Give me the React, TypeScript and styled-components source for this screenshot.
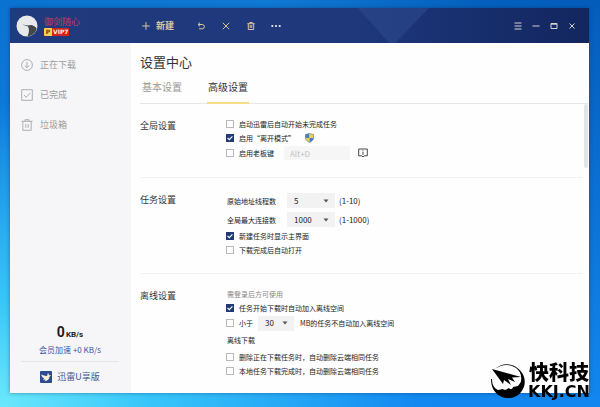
import React from "react";
import styled, { createGlobalStyle } from "styled-components";

const Global = createGlobalStyle`
  * { box-sizing: border-box; }
  html, body { margin: 0; }
  body, button, input, select {
    font-family: "Noto Sans CJK SC", sans-serif;
    font-size: 7px;
    line-height: 12px;
    color: #222;
  }
  button, input, select { margin: 0; padding: 0; border: 0; background: none; }
  button, select, a { cursor: pointer; }
`;

const Desktop = styled.div`
  min-height: 100vh;
  display: flex;
  padding: 8px 11px 14px 10px;
  background:
    radial-gradient(ellipse 70% 75% at 0% 100%, #6ce8fb 0%, rgba(60, 205, 250, 0.9) 35%, rgba(30, 150, 235, 0) 100%),
    linear-gradient(180deg, rgba(0, 70, 170, 0) 0%, rgba(20, 140, 245, 0.9) 100%),
    linear-gradient(90deg, #0a72d0 0%, #1079d4 45%, #0560bd 80%, #045cba 100%);
`;

const Window = styled.div`
  flex: 1;
  min-width: 0;
  display: flex;
  flex-direction: column;
  background: #fefefe;
  box-shadow: 0 0 4px rgba(0, 40, 90, 0.45);
`;

const Header = styled.header`
  position: relative;
  height: 35px;
  display: flex;
  align-items: center;
  padding: 0 13px 0 6px;
  background: linear-gradient(90deg, #203a7e 0%, #1e387b 60%, #152a66 90%, #12265f 100%);
`;

const HeaderFacet = styled.svg`
  position: absolute;
  top: 0;
  right: 160px;
  width: 71px;
  height: 35px;
`;

const Account = styled.div`
  flex: none;
  width: 126px;
  display: flex;
  align-items: center;
  gap: 6px;
`;

const UserInfo = styled.div`
  display: flex;
  flex-direction: column;
  align-items: flex-start;
  gap: 1px;
`;

const UserName = styled.div`
  font-size: 9px;
  line-height: 11px;
  color: #c23a5c;
`;

const Vip = styled.div`
  display: flex;
  height: 8px;
  border-radius: 1px;
  overflow: hidden;
  background: #d6231c;
  color: #fff0c4;
  font: 700 6px/8px "DejaVu Sans", sans-serif;
`;

const VipMark = styled.span`
  width: 8px;
  background: #f7cf55;
  color: #6b3c08;
  text-align: center;
`;

const VipLevel = styled.span`
  padding: 0 1px;
`;

const Toolbar = styled.nav`
  flex: 1;
  display: flex;
  align-items: center;
`;

const ToolButton = styled.button<{ $wide?: boolean }>`
  display: flex;
  align-items: center;
  justify-content: center;
  gap: 6px;
  width: ${(p) => (p.$wide ? 32 : 12)}px;
  margin-right: ${(p) => (p.$wide ? 21 : 13)}px;
  height: 16px;
  color: #d9c69c;
  font-size: 9px;
  font-weight: 700;
  white-space: nowrap;
`;

const WindowButtons = styled.div`
  position: relative;
  display: flex;
  gap: 10px;
`;

const WindowButton = styled.button`
  display: flex;
  width: 8px;
  height: 10px;
  align-items: center;
  color: #d5d3cf;
`;

const Body = styled.div`
  flex: 1;
  display: flex;
  min-height: 0;
`;

const Sidebar = styled.aside`
  flex: none;
  width: 121px;
  display: flex;
  flex-direction: column;
  background: #f6f6f8;
  padding: 7px 12px 10px 11px;
`;

const SideLink = styled.a`
  display: flex;
  align-items: center;
  gap: 7px;
  height: 30px;
  font-size: 9px;
  color: #9c9c9e;
  text-decoration: none;
`;

const Speed = styled.div`
  margin-top: auto;
  display: flex;
  align-items: baseline;
  justify-content: center;
  gap: 1px;
  font: 700 8px/18px Roboto, sans-serif;
  color: #1c1c1c;
`;

const SpeedValue = styled.span`
  font-size: 14px;
`;

const Boost = styled.div`
  text-align: center;
  font-size: 8px;
  color: #3954a8;
  padding-bottom: 5px;
  border-bottom: 1px solid #e2e5ea;
`;

const Edition = styled.a`
  display: flex;
  align-items: center;
  justify-content: center;
  gap: 5px;
  padding-top: 9px;
  font-size: 9px;
  color: #3f5694;
  text-decoration: none;
`;

const Main = styled.main`
  flex: 1;
  min-width: 0;
  padding: 10px 1px 0 9px;
`;

const Title = styled.h1`
  margin: 0;
  font-size: 13px;
  line-height: 18px;
  font-weight: 400;
  color: #333;
`;

const Tabs = styled.div`
  display: flex;
  gap: 24px;
  margin-top: 7px;
  padding-left: 1px;
  border-bottom: 1px solid #e6e6e6;
`;

const Tab = styled.button<{ $active?: boolean }>`
  width: 42px;
  height: 26px;
  padding-bottom: 6px;
  margin-bottom: -1px;
  font-size: 10px;
  white-space: nowrap;
  color: ${(p) => (p.$active ? "#333" : "#999")};
  border-bottom: 2px solid ${(p) => (p.$active ? "#f7dc8a" : "transparent")};
`;

const Panel = styled.div`
  display: flex;
  align-items: flex-start;
`;

const Sections = styled.div`
  flex: 1;
  min-width: 0;
`;

const ScrollThumb = styled.div`
  width: 4px;
  height: 64px;
  margin-left: 2px;
  border-radius: 2px;
  background: #e3e4e6;
`;

const Section = styled.section`
  display: grid;
  grid-template-columns: 86px 1fr;
  padding: 13px 0 16px;
  & + & { border-top: 1px solid #f2f2f2; }
  &:last-child { padding-bottom: 0; }
`;

const SectionTitle = styled.h2`
  margin: 0;
  padding-top: 2px;
  font-size: 9px;
  line-height: 14px;
  font-weight: 400;
  color: #333;
`;

const Rows = styled.div`
  display: flex;
  flex-direction: column;
`;

const Row = styled.div<{ $height?: number }>`
  display: flex;
  align-items: center;
  height: ${(p) => p.$height ?? 14}px;
  white-space: nowrap;
`;

const Note = styled.p<{ $muted?: boolean }>`
  margin: 0;
  line-height: ${(p) => (p.$muted ? 14 : 19)}px;
  padding: 0 0 0 1px;
  color: ${(p) => (p.$muted ? "#888" : "#222")};
`;

const CheckLabel = styled.label`
  display: flex;
  align-items: center;
  gap: 5px;
`;

const Check = styled.input`
  appearance: none;
  width: 8px;
  height: 8px;
  border: 1px solid #b9b9b9;
  background: #fff;
  &:checked {
    border-color: #223a78;
    background: #223a78 url("data:image/svg+xml,%3Csvg xmlns='http://www.w3.org/2000/svg' viewBox='0 0 6 6'%3E%3Cpath d='M.6 3l1.7 1.6L5.4 1.3' fill='none' stroke='white' stroke-width='1.1'/%3E%3C/svg%3E") center / 6px 6px no-repeat;
  }
`;

const Hotkey = styled.input`
  width: 66px;
  height: 14px;
  margin: 0 8px 0 10px;
  padding: 0 6px;
  background: #f6f6f6;
  font-size: 8px;
  &::placeholder { color: #bfbfbf; opacity: 1; }
`;

const FieldLabel = styled.label`
  width: 61px;
  padding-left: 1px;
`;

const Picker = styled.select<{ $small?: boolean }>`
  appearance: none;
  width: ${(p) => (p.$small ? 36 : 48)}px;
  height: 15px;
  margin: ${(p) => (p.$small ? "0 6px 0 5px" : "0 4px 0 0")};
  padding-left: 7px;
  font-size: 8px;
  background: #f2f2f2 url("data:image/svg+xml,%3Csvg xmlns='http://www.w3.org/2000/svg' viewBox='0 0 6 4'%3E%3Cpath d='M.5.5h5L3 3.5z' fill='%23555'/%3E%3C/svg%3E") right 6px center / 6px 4px no-repeat;
`;

const Shield = styled.svg`
  margin-left: 10px;
`;

const Range = styled.span`
  font-size: 8px;
`;

const Watermark = styled.div`
  position: fixed;
  right: 10px;
  bottom: 7px;
  display: flex;
  align-items: center;
  gap: 3px;
  color: #000;
`;

const WatermarkText = styled.div`
  display: flex;
  flex-direction: column;
  align-items: center;
  gap: 2px;
`;

const WatermarkName = styled.div`
  font: 900 20px/20px "Noto Sans CJK SC", sans-serif;
`;

const WatermarkSite = styled.div`
  font: 700 16px/16px "DejaVu Sans", sans-serif;
`;

function Checkbox({ label, checked }: { label: string; checked?: boolean }) {
  return (
    <CheckLabel>
      <Check type="checkbox" defaultChecked={checked} />
      {label}
    </CheckLabel>
  );
}

function Line({ size, d, width = 1, box = 12 }: { size: number; d: string; width?: number; box?: number }) {
  return (
    <svg width={size} height={size} viewBox={`0 0 ${box} ${box}`} fill="none" stroke="currentColor" strokeWidth={width}>
      <path d={d} />
    </svg>
  );
}

const sideItems = [
  { label: "正在下载", d: "M6 .6a5.4 5.4 0 1 0 0 10.8A5.4 5.4 0 0 0 6 .6zM6 3v5.6M3.8 6.5L6 8.7l2.2-2.2" },
  { label: "已完成", d: "M.7.7h10.6v10.6H.7zM3 6l2.2 2.2L9.2 4" },
  { label: "垃圾箱", d: "M.5 2.3h11M4 2.3V.7h4v1.6M1.8 2.3v9h8.4v-9M4.8 5v3.8M7.2 5v3.8" },
];

const windowItems = [
  { label: "菜单", d: "M.5 1h7M.5 4h7M.5 7h7" },
  { label: "最小化", d: "M.5 4h7" },
  { label: "最大化", d: "M1 1.5h6v5H1zM1 2.2h6" },
  { label: "关闭", d: "M1.5 1.5l5 5M6.5 1.5l-5 5" },
];

export default function App() {
  return (
    <>
      <Global />
      <Desktop>
        <Window>
          <Header>
            <HeaderFacet viewBox="0 0 71 35" aria-hidden="true">
              <path d="M0 0h71L37 35h-6z" fill="#2a4688" opacity=".75" />
            </HeaderFacet>
            <Account>
              <svg width="22" height="22" viewBox="0 0 22 22" aria-hidden="true">
                <circle cx="11" cy="11" r="10.5" fill="#e8e9ea" />
                <path d="M6 9.5l6 .9c3-1.2 6.5-.4 8.7 3.2-.8 3.4-3 5.9-6.2 7.2-1.600.3-2.500.3-3 .2 1.8-3.6 2-6.800.5-9.600z" fill="#45474a" />
              </svg>
              <UserInfo>
                <UserName>御剑随心</UserName>
                <Vip><VipMark>P</VipMark><VipLevel>VIP7</VipLevel></Vip>
              </UserInfo>
            </Account>
            <Toolbar>
              <ToolButton $wide>
                <Line size={8} box={8} d="M4 .2v7.6M.2 4h7.6" />
                新建
              </ToolButton>
              <ToolButton aria-label="恢复"><Line size={8} box={8} d="M3 .6L1 2.5l2 1.9M1 2.5h4.2a2 2 0 0 1 0 4.3H2" /></ToolButton>
              <ToolButton aria-label="取消"><Line size={8} box={8} d="M.8.8l6.4 6.4M7.200.8L.8 7.2" /></ToolButton>
              <ToolButton aria-label="删除"><Line size={8} box={8} d="M.3 1.7h7.4M2.7 1.5V.5h2.6v1M1.3 1.7v5.8h5.4V1.7M3.2 3v3M4.8 3v3" /></ToolButton>
              <ToolButton aria-label="更多">
                <svg width="10" height="4" viewBox="0 0 10 4" fill="#eee"><circle cx="1.3" cy="2" r="1.1" /><circle cx="5" cy="2" r="1.1" /><circle cx="8.7" cy="2" r="1.1" /></svg>
              </ToolButton>
            </Toolbar>
            <WindowButtons>
              {windowItems.map((w) => (
                <WindowButton key={w.label} aria-label={w.label}><Line size={8} box={8} d={w.d} /></WindowButton>
              ))}
            </WindowButtons>
          </Header>
          <Body>
            <Sidebar>
              {sideItems.map((s) => (
                <SideLink key={s.label} href="#"><Line size={12} width={0.8} d={s.d} />{s.label}</SideLink>
              ))}
              <Speed><SpeedValue>0</SpeedValue>KB/s</Speed>
              <Boost>会员加速 +0 KB/s</Boost>
              <Edition href="#">
                <svg width="12" height="12" viewBox="0 0 12 12" aria-hidden="true">
                  <rect width="12" height="12" rx="1" fill="#2c4b93" />
                  <path d="M1.2 3.5l3.6 1.2L7 5l1-3.2 1.2 2.5L11 4 9.4 6c-.2 2.6-2 4-5 4.2l1.2-1.4-2.8-.3 1.4-1.2C2.5 6.8 1.6 5.4 1.2 3.5z" fill="#f6ead0" />
                </svg>
                迅雷U享版
              </Edition>
            </Sidebar>
            <Main>
              <Title>设置中心</Title>
              <Tabs role="tablist">
                <Tab role="tab" aria-selected="false">基本设置</Tab>
                <Tab role="tab" aria-selected="true" $active>高级设置</Tab>
              </Tabs>
              <Panel>
                <Sections>
                  <Section>
                    <SectionTitle>全局设置</SectionTitle>
                    <Rows>
                      <Row><Checkbox label="启动迅雷后自动开始未完成任务" /></Row>
                      <Row>
                        <Checkbox label="启用“离开模式”" checked />
                        <Shield width="9" height="10" viewBox="0 0 9 10" aria-hidden="true">
                          <path d="M.5 1.5l4-1V5h-4z" fill="#3a82c4" />
                          <path d="M4.5.5l4 1V5h-4z" fill="#f4cc4a" />
                          <path d="M.5 5h4v4.5C2 8.3.7 7 .5 5z" fill="#f4cc4a" />
                          <path d="M4.5 5h4c-.2 2-1.5 3.3-4 4.5z" fill="#3a82c4" />
                          <path d="M.5 1.5l4-1 4 1V5c-.2 2-1.5 3.3-4 4.5C2 8.3.7 7 .5 5z" fill="none" stroke="#6b7f91" strokeWidth=".7" />
                        </Shield>
                      </Row>
                      <Row $height={16}>
                        <Checkbox label="启用老板键" />
                        <Hotkey aria-label="老板键" placeholder="Alt+D" />
                        <svg width="10" height="10" viewBox="0 0 10 10" fill="none" stroke="#333" strokeWidth=".9" aria-hidden="true">
                          <path d="M.7 1h8.6v6.8H6.2L5 9 3.8 7.8H.7zM5 2.3v1M5 4v2.8" />
                        </svg>
                      </Row>
                    </Rows>
                  </Section>
                  <Section>
                    <SectionTitle>任务设置</SectionTitle>
                    <Rows>
                      <Row $height={19}>
                        <FieldLabel htmlFor="threads">原始地址线程数</FieldLabel>
                        <Picker id="threads"><option>5</option></Picker>
                        <Range>(1-10)</Range>
                      </Row>
                      <Row $height={19}>
                        <FieldLabel htmlFor="links">全局最大连接数</FieldLabel>
                        <Picker id="links"><option>1000</option></Picker>
                        <Range>(1-1000)</Range>
                      </Row>
                      <Row><Checkbox label="新建任务时显示主界面" checked /></Row>
                      <Row><Checkbox label="下载完成后自动打开" /></Row>
                    </Rows>
                  </Section>
                  <Section>
                    <SectionTitle>离线设置</SectionTitle>
                    <Rows>
                      <Note $muted>需登录后方可使用</Note>
                      <Row><Checkbox label="任务开始下载时自动加入离线空间" checked /></Row>
                      <Row $height={16}>
                        <Checkbox label="小于" />
                        <Picker $small aria-label="任务大小"><option>30</option></Picker>
                        MB的任务不自动加入离线空间
                      </Row>
                      <Note>离线下载</Note>
                      <Row><Checkbox label="删除正在下载任务时，自动删除云端相同任务" /></Row>
                      <Row><Checkbox label="本地任务下载完成时，自动删除云端相同任务" /></Row>
                    </Rows>
                  </Section>
                </Sections>
                <ScrollThumb />
              </Panel>
            </Main>
          </Body>
        </Window>
      </Desktop>
      <Watermark>
        <svg width="34" height="34" viewBox="0 0 34 34" aria-hidden="true">
          <path d="M4 5C10-1 19-1 25 3c8 5 11 14 7 22-4 8-13 11-21 8C4 30 0 24 0 15h1c0 6 2 9 6 11 2 0 3-1 5-1 2 2 4 0 6-1 1 2 4 1 4-1l5-1c1-2 3-3 3-5 1-6-1-10-5-13C19 0 11 0 4 5z" fill="#000" />
          <path d="M1 5l29 8-9 .5 3 4.500-7-3 3 6-7-5-1 4z" fill="#000" />
        </svg>
        <WatermarkText>
          <WatermarkName>快科技</WatermarkName>
          <WatermarkSite>KKJ.CN</WatermarkSite>
        </WatermarkText>
      </Watermark>
    </>
  );
}
